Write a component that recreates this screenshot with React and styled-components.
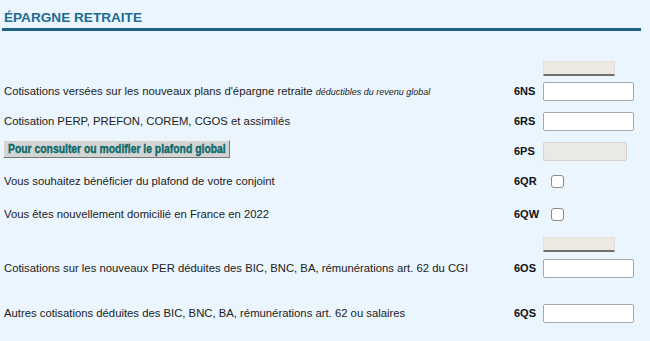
import React from "react";
import styled, { createGlobalStyle } from "styled-components";

const Global = createGlobalStyle`
  html, body { margin: 0; padding: 0; background: #ebf5fe; }
  body { font-family: "Liberation Sans", Arial, sans-serif; color: #222; }
`;

const Page = styled.div`
  width: 650px;
  height: 341px;
  background: #ebf5fe;
  overflow: hidden;
`;

const Header = styled.div`
  margin: 0 9px 0 2px;
  padding: 11px 0 3px 2px;
  border-bottom: 3px solid #1d6283;
`;

const Title = styled.h2`
  margin: 0;
  font-family: "Liberation Sans", Arial, sans-serif;
  font-size: 13.6px;
  font-weight: bold;
  color: #1c6b92;
  line-height: 14px;
`;

const Row = styled.div`
  display: grid;
  grid-template-columns: 510px 29px 1fr;
  align-items: ${(p) => (p.$bottom ? "end" : "center")};
  height: ${(p) => p.$h}px;
  padding-left: 4px;
`;

const Label = styled.div`
  font-size: 11.3px;
  color: #222;
  white-space: nowrap;
`;

const Hint = styled.i`
  font-size: 9px;
  color: #222;
`;

const Code = styled.div`
  font-size: 11px;
  font-weight: bold;
  color: #111;
`;

const Field = styled.input`
  box-sizing: border-box;
  width: ${(p) => p.$w || 91}px;
  height: 19px;
  margin: 0;
  border: 1px solid ${(p) => (p.disabled ? "#d6d4cf" : "#a8a8a8")};
  border-radius: 2px;
  background: ${(p) => (p.disabled ? "#ebe9e3" : "#fff")};
  outline: none;
`;

const Bar = styled.div`
  width: 72px;
  height: 15px;
  box-sizing: border-box;
  background: #ebe9e2;
  border: 1px solid #e2e0da;
  border-bottom: 2px solid #6e6e6e;
  border-radius: 1px;
`;

const Check = styled.span`
  display: block;
  width: 11px;
  height: 11px;
  margin-left: 8px;
  border: 1px solid #8a8a8a;
  border-radius: 3px;
  background: #fff;
`;

const Button = styled.button`
  box-sizing: border-box;
  margin: 0 0 5px -1px;
  width: 227px;
  height: 18px;
  padding: 0 0 0 4px;
  overflow: hidden;
  text-align: left;
  background: #d4d4d4;
  border: 1px solid;
  border-color: #f4f4f4 #777 #777 #f4f4f4;
  cursor: pointer;
  justify-self: start;
`;

const ButtonText = styled.span`
  display: inline-block;
  font-family: "Liberation Sans", Arial, sans-serif;
  font-weight: bold;
  font-size: 12.8px;
  line-height: 16px;
  color: #0e6a6a;
  -webkit-text-stroke: 0.4px #0e6a6a;
  white-space: nowrap;
  transform: scaleX(0.81);
  transform-origin: left center;
`;

export default function App() {
  return (
    <Page>
      <Global />
      <Header>
        <Title>ÉPARGNE RETRAITE</Title>
      </Header>
      <Row $h={45} $bottom>
        <span />
        <span />
        <Bar />
      </Row>
      <Row $h={30}>
        <Label>
          Cotisations versées sur les nouveaux plans d'épargne retraite{" "}
          <Hint>déductibles du revenu global</Hint>
        </Label>
        <Code>6NS</Code>
        <Field />
      </Row>
      <Row $h={30}>
        <Label>Cotisation PERP, PREFON, COREM, CGOS et assimilés</Label>
        <Code>6RS</Code>
        <Field />
      </Row>
      <Row $h={30}>
        <Button>
          <ButtonText>Pour consulter ou modifier le plafond global</ButtonText>
        </Button>
        <Code>6PS</Code>
        <Field disabled $w={84} />
      </Row>
      <Row $h={30}>
        <Label>Vous souhaitez bénéficier du plafond de votre conjoint</Label>
        <Code>6QR</Code>
        <Check />
      </Row>
      <Row $h={36}>
        <Label>Vous êtes nouvellement domicilié en France en 2022</Label>
        <Code>6QW</Code>
        <Check />
      </Row>
      <Row $h={20} $bottom>
        <span />
        <span />
        <Bar />
      </Row>
      <Row $h={32}>
        <Label>
          Cotisations sur les nouveaux PER déduites des BIC, BNC, BA, rémunérations art. 62 du CGI
        </Label>
        <Code>6OS</Code>
        <Field />
      </Row>
      <Row $h={58}>
        <Label>
          Autres cotisations déduites des BIC, BNC, BA, rémunérations art. 62 ou salaires
        </Label>
        <Code>6QS</Code>
        <Field />
      </Row>
    </Page>
  );
}
